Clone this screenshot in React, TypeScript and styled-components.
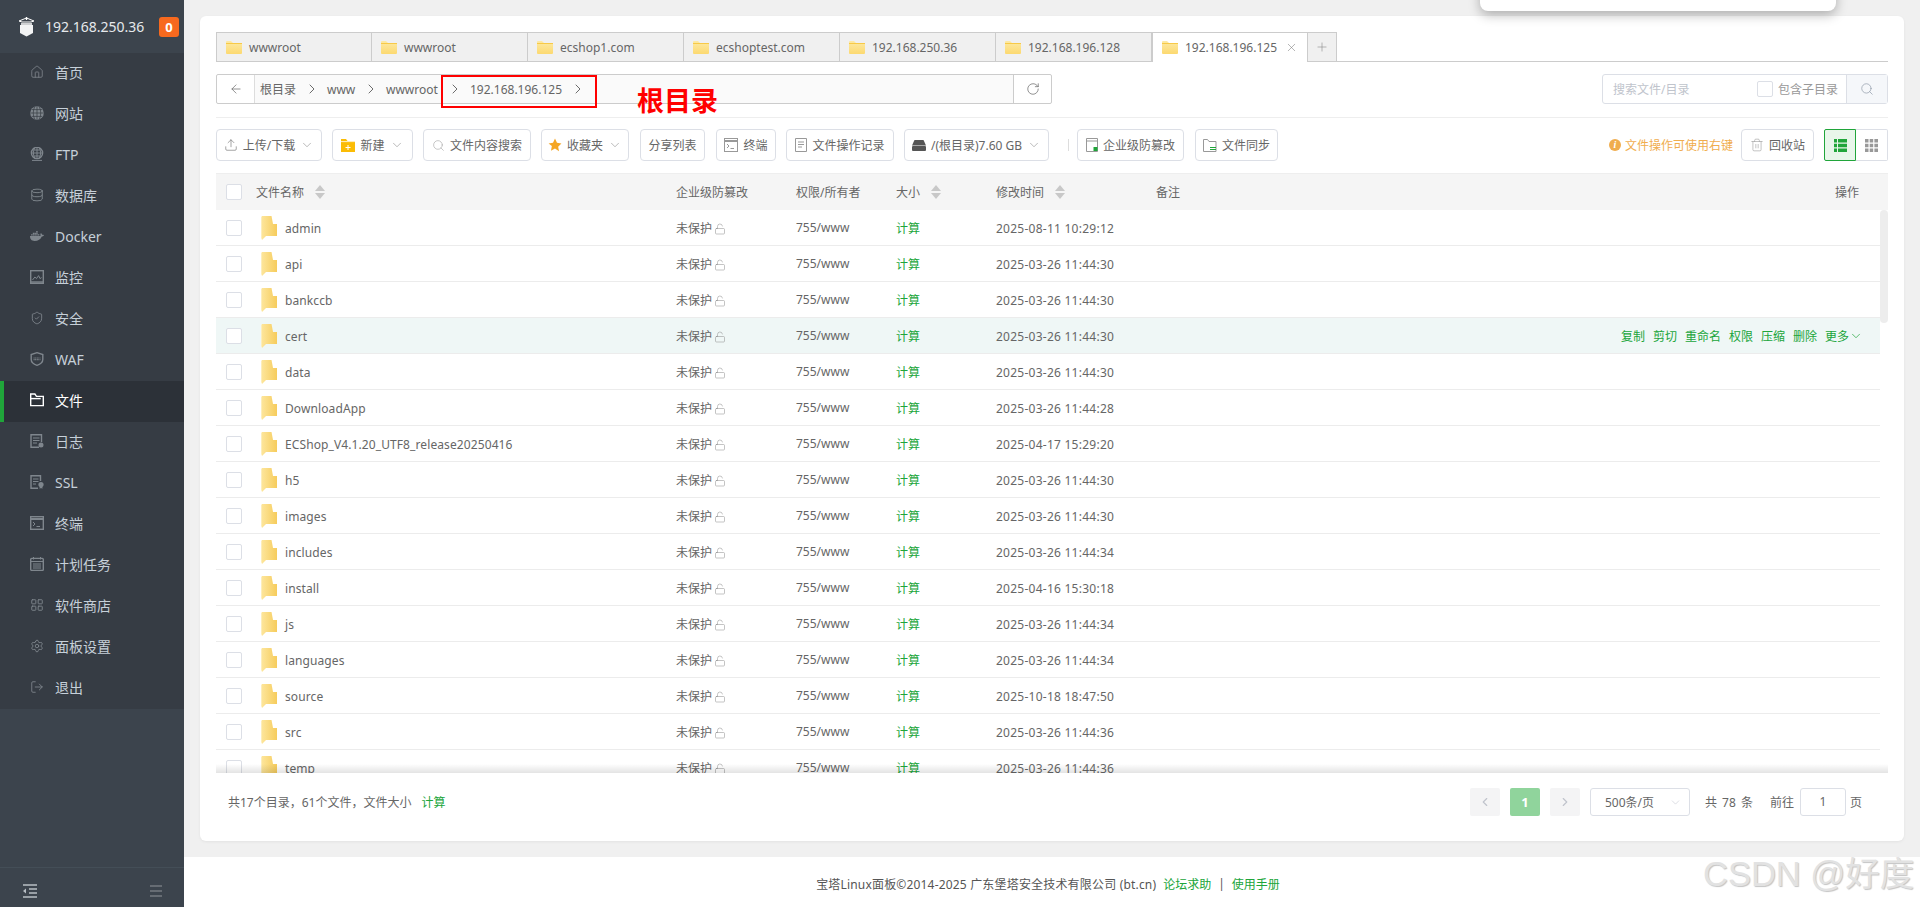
import React from "react";
import styled, { createGlobalStyle } from "styled-components";
import {
  House, Database, ShieldCheck, Settings, LayoutGrid, LogOut, ChevronDown, ChevronLeft, ChevronRight,
  ArrowLeft, RotateCw, X, Plus, Search, Upload, Trash2, LockOpen,
} from "lucide-react";
import { FaDocker } from "react-icons/fa6";

const Global = createGlobalStyle`
  html, body { margin: 0; padding: 0; height: 100%; background: #fff; overflow: hidden; }
  #root { height: 100%; }
  * { box-sizing: border-box; }
  body { font-family: "Noto Sans", "Noto Sans CJK SC", sans-serif; font-size: 12px; color: #666; }
`;

const Page = styled.div`
  position: relative;
  display: grid;
  grid-template-columns: 184px minmax(0, 1fr);
  grid-template-rows: minmax(0, 1fr);
  height: 907px;
  overflow: hidden;
`;
const Sidebar = styled.aside`
  display: flex;
  flex-direction: column;
  min-height: 0;
  background: #3c444d;
  color: #c6d0d9;
`;
const Brand = styled.div`
  display: flex;
  align-items: center;
  flex: none;
  height: 53px;
  padding: 0 5px 0 18px;
  font-size: 14px;
  color: #e6e9ec;
`;
const BrandName = styled.span`
  margin-left: 10px;
  flex: 1;
  white-space: nowrap;
`;
const Badge = styled.span`
  width: 20px;
  height: 20px;
  border-radius: 3px;
  background: #f7691e;
  color: #fff;
  font-weight: 700;
  font-size: 13px;
  line-height: 20px;
  text-align: center;
`;
const Menu = styled.nav`
  display: flex;
  flex-direction: column;
  flex: none;
  background: #363c44;
`;
const MenuItem = styled.div<{ $active?: boolean }>`
  display: flex;
  align-items: center;
  gap: 11px;
  height: 41px;
  padding-left: ${(p) => (p.$active ? "26px" : "30px")};
  padding-bottom: 3px;
  font-size: 14px;
  color: ${(p) => (p.$active ? "#fff" : "#c6d0d9")};
  background: ${(p) => (p.$active ? "#2c3138" : "transparent")};
  border-left: ${(p) => (p.$active ? "4px solid #20a53a" : "none")};
  svg { width: 14px; height: 14px; flex: none; color: ${(p) => (p.$active ? "#fff" : "#7f868d")}; }
`;
const SideSpacer = styled.div`
  flex: 1;
`;
const SideBottom = styled.div`
  display: flex;
  align-items: center;
  justify-content: space-between;
  flex: none;
  height: 40px;
  padding: 6px 22px 0 23px;
  border-top: 1px solid #444e57;
`;
const Main = styled.main`
  display: flex;
  flex-direction: column;
  min-width: 0;
  min-height: 0;
`;
const Content = styled.div`
  flex: 1;
  min-height: 0;
  display: flex;
  padding: 16px;
  background: #f0f0f0;
`;
const Card = styled.section`
  flex: 1;
  min-width: 0;
  min-height: 0;
  display: flex;
  flex-direction: column;
  padding: 16px 16px 25px;
  background: #fff;
  border-radius: 6px;
  box-shadow: 0 1px 3px rgba(0, 0, 0, 0.06);
`;
const Tabs = styled.div`
  display: flex;
  height: 30px;
  flex: none;
  border-bottom: 1px solid #ccc;
`;
const Tab = styled.div<{ $active?: boolean }>`
  display: flex;
  align-items: center;
  width: 156px;
  height: ${(p) => (p.$active ? "30px" : "29px")};
  padding: 0 9px;
  gap: 7px;
  color: #666;
  font-size: 12px;
  background: ${(p) => (p.$active ? "#fff" : "#f0f0f0")};
  border: 1px solid #ccc;
  border-left: ${(p) => (p.$active ? "1px solid #ccc" : "none")};
  border-bottom: none;
  &:first-child { border-left: 1px solid #ccc; }
  span { flex: 1; white-space: nowrap; }
  svg.close { color: #777; }
`;
const TabAdd = styled.div`
  display: flex;
  align-items: center;
  justify-content: center;
  width: 29px;
  height: 29px;
  background: #f0f0f0;
  border: 1px solid #ccc;
  border-left: none;
  border-bottom: none;
  color: #888;
`;
const PathRow = styled.div`
  display: flex;
  justify-content: space-between;
  flex: none;
  margin-top: 12px;
  height: 30px;
`;
const PathBar = styled.div`
  display: flex;
  width: 836px;
  height: 30px;
  border: 1px solid #ccc;
  border-radius: 2px;
`;
const PathButton = styled.div`
  display: flex;
  align-items: center;
  justify-content: center;
  flex: none;
  width: 37px;
  color: #666;
`;
const PathTrail = styled.div`
  flex: 1;
  display: flex;
  align-items: center;
  background: #fafafa;
  border-left: 1px solid #ddd;
  border-right: 1px solid #ccc;
  padding-left: 5px;
  color: #666;
`;
const Crumb = styled.span<{ $w: number }>`
  width: ${(p) => p.$w}px;
  white-space: nowrap;
`;
const CrumbArrow = styled.span`
  display: flex;
  justify-content: center;
  width: 31px;
  color: #555;
`;
const SearchBox = styled.div`
  display: flex;
  align-items: center;
  width: 286px;
  height: 30px;
  border: 1px solid #dcdfe6;
  border-radius: 3px;
`;
const SearchPlaceholder = styled.span`
  flex: 1;
  padding-left: 10px;
  color: #c0c4cc;
`;
const SearchCheck = styled.span`
  display: flex;
  align-items: center;
  gap: 5px;
  padding-right: 8px;
  color: #999;
`;
const SearchButton = styled.span`
  display: flex;
  align-items: center;
  justify-content: center;
  flex: none;
  width: 41px;
  height: 100%;
  background: #f5f7fa;
  border-left: 1px solid #dcdfe6;
  color: #8f99a8;
`;
const Box = styled.span`
  display: inline-block;
  flex: none;
  width: 16px;
  height: 16px;
  background: #fff;
  border: 1px solid #dcdfe6;
  border-radius: 2px;
`;
const Rule = styled.div`
  flex: none;
  height: 1px;
  margin-top: 13px;
  background: #eee;
`;
const Toolbar = styled.div`
  display: flex;
  align-items: center;
  flex: none;
  height: 32px;
  margin-top: 11px;
`;
const ToolButton = styled.div<{ $w: number; $gap?: number }>`
  display: flex;
  align-items: center;
  justify-content: center;
  gap: 5px;
  flex: none;
  width: ${(p) => p.$w}px;
  height: 32px;
  margin-right: ${(p) => p.$gap ?? 10}px;
  border: 1px solid #dcdfe6;
  border-radius: 4px;
  color: #666;
  white-space: nowrap;
`;
const ToolDivider = styled.span`
  width: 1px;
  height: 12px;
  margin: 0 8px 0 19px;
  background: #ddd;
`;
const ToolSpacer = styled.span`
  flex: 1;
`;
const Hint = styled.span`
  display: flex;
  align-items: center;
  gap: 4px;
  margin-right: 8px;
  color: #f0ad4e;
`;
const HintDot = styled.span`
  width: 12px;
  height: 12px;
  border-radius: 50%;
  background: #f0ad4e;
  color: #fff;
  font: italic 700 10px/12px "Liberation Serif", serif;
  text-align: center;
`;
const ViewButton = styled.span<{ $active?: boolean }>`
  display: flex;
  align-items: center;
  justify-content: center;
  width: 32px;
  height: 32px;
  border: 1px solid ${(p) => (p.$active ? "#20a53a" : "#dcdfe6")};
  border-left-width: ${(p) => (p.$active ? "1px" : "0")};
  border-radius: ${(p) => (p.$active ? "2px 0 0 2px" : "0 2px 2px 0")};
  background: ${(p) => (p.$active ? "#e8f6ea" : "#fff")};
  color: ${(p) => (p.$active ? "#20a53a" : "#999")};
`;
const columns = "30px 420px 120px 100px 100px 160px 1fr auto";
const HeadRow = styled.div`
  display: grid;
  grid-template-columns: ${columns};
  align-items: center;
  flex: none;
  height: 37px;
  margin-top: 12px;
  padding: 0 29px 0 10px;
  background: #f5f5f5;
  border-top: 1px solid #eee;
  color: #666;
`;
const HeadCell = styled.span`
  display: flex;
  align-items: center;
  gap: 11px;
  white-space: nowrap;
`;
const CheckCell = styled.span`
  display: flex;
`;
const SortMark = styled.span`
  display: flex;
  flex-direction: column;
  gap: 2px;
  &::before, &::after {
    content: "";
    width: 0;
    border-left: 5px solid transparent;
    border-right: 5px solid transparent;
  }
  &::before { border-bottom: 6px solid #c8c8c8; }
  &::after { border-top: 6px solid #c8c8c8; }
`;
const ListWrap = styled.div`
  position: relative;
  flex: 1;
  min-height: 0;
  display: flex;
  overflow: hidden;
  &::after {
    content: "";
    position: absolute;
    left: 0;
    right: 0;
    bottom: 0;
    height: 9px;
    background: linear-gradient(to bottom, rgba(0, 0, 0, 0), rgba(0, 0, 0, 0.11));
  }
`;
const Rows = styled.div`
  flex: 1;
  min-width: 0;
`;
const Row = styled.div<{ $hover?: boolean }>`
  display: grid;
  grid-template-columns: ${columns};
  align-items: center;
  height: 36px;
  padding: 0 17px 0 10px;
  border-bottom: 1px solid #ececec;
  background: ${(p) => (p.$hover ? "#eff7f6" : "#fff")};
  color: #666;
  white-space: nowrap;
`;
const NameCell = styled.span`
  display: flex;
  align-items: center;
  gap: 8px;
  padding-left: 5px;
  font-size: 12px;
`;
const NameText = styled.span`
  padding-top: 2px;
  letter-spacing: 0.1px;
`;
const TimeCell = styled.span`
  padding-top: 1px;
  letter-spacing: 0.25px;
`;
const ProtectCell = styled.span`
  display: flex;
  align-items: center;
  gap: 2px;
  svg { color: #888; margin-top: 2px; }
`;
const GreenText = styled.span`
  color: #20a53a;
`;
const Actions = styled.span`
  display: flex;
  align-items: center;
  gap: 8px;
  color: #20a53a;
  svg { margin-left: -8px; }
`;
const Scrollbar = styled.div`
  flex: none;
  width: 8px;
`;
const Thumb = styled.div`
  height: 113px;
  border-radius: 4px;
  background: #ededed;
`;
const CardFoot = styled.div`
  display: flex;
  align-items: center;
  justify-content: space-between;
  flex: none;
  height: 28px;
  margin-top: 15px;
  padding: 0 26px 0 12px;
`;
const Summary = styled.span`
  display: flex;
  gap: 10px;
`;
const Pager = styled.div`
  display: flex;
  align-items: center;
`;
const PageButton = styled.span<{ $current?: boolean }>`
  display: flex;
  align-items: center;
  justify-content: center;
  width: 30px;
  height: 28px;
  margin-right: 10px;
  border-radius: 2px;
  background: ${(p) => (p.$current ? "#90d49c" : "#f4f4f5")};
  color: ${(p) => (p.$current ? "#fff" : "#c0c4cc")};
  font-weight: 700;
  font-size: 13px;
`;
const PageSelect = styled.span`
  display: flex;
  align-items: center;
  justify-content: space-between;
  width: 100px;
  height: 28px;
  padding: 0 7px 0 14px;
  border: 1px solid #dcdfe6;
  border-radius: 3px;
  color: #666;
  svg { color: #c0c4cc; }
`;
const PageText = styled.span<{ $ml: number; $wide?: boolean }>`
  margin-left: ${(p) => p.$ml}px;
  word-spacing: ${(p) => (p.$wide ? "2px" : "0")};
  white-space: nowrap;
`;
const PageInput = styled.span`
  width: 46px;
  height: 28px;
  margin-left: 6px;
  border: 1px solid #dcdfe6;
  border-radius: 3px;
  line-height: 26px;
  text-align: center;
`;
const Footer = styled.footer`
  display: flex;
  align-items: center;
  justify-content: center;
  gap: 7px;
  flex: none;
  height: 50px;
  padding: 3px 8px 0 0;
  background: #fff;
  color: #555;
  white-space: nowrap;
`;
const FooterCopy = styled.span`
  letter-spacing: 0.18px;
`;
const Toast = styled.div`
  position: absolute;
  top: -20px;
  left: 1480px;
  width: 356px;
  height: 31px;
  background: #fff;
  border-radius: 8px;
  box-shadow: 0 4px 12px rgba(0, 0, 0, 0.28);
`;
const Annotation = styled.div`
  position: absolute;
  left: 441px;
  top: 75px;
  width: 156px;
  height: 33px;
  border: 2px solid #f00;
`;
const AnnotationLabel = styled.div`
  position: absolute;
  left: 637px;
  top: 81px;
  color: #f00;
  font-size: 27px;
  font-weight: 700;
  line-height: 38px;
  white-space: nowrap;
  font-family: "Noto Sans CJK SC", sans-serif;
`;
const Watermark = styled.div`
  position: absolute;
  left: 1703px;
  top: 854px;
  color: #e2e2e2;
  font: 34.5px/40px "Liberation Sans", "Noto Sans CJK SC", sans-serif;
  text-shadow: 1px 1px 1px #c4c4c4;
  white-space: nowrap;
`;

const TabFolder = () => (
  <svg width="16" height="13" viewBox="0 0 16 13" style={{ flex: "none" }}>
    <defs>
      <linearGradient id="tf" x1="0" y1="0" x2="0" y2="1">
        <stop offset="0" stopColor="#fdeaa5" />
        <stop offset="1" stopColor="#fcd970" />
      </linearGradient>
    </defs>
    <path d="M0 1a1 1 0 0 1 1-1h4l2 2h8a1 1 0 0 1 1 1v9a1 1 0 0 1-1 1H1a1 1 0 0 1-1-1z" fill="url(#tf)" />
    <path d="M0 2.500h16" stroke="#f7c948" strokeWidth="1" />
  </svg>
);
const RowFolder = () => (
  <svg width="16" height="24" viewBox="0 0 16 24" style={{ flex: "none" }}>
    <defs>
      <linearGradient id="rf" x1="0" y1="0" x2="1" y2="0">
        <stop offset="0" stopColor="#fde59a" />
        <stop offset="1" stopColor="#f6cc5c" />
      </linearGradient>
    </defs>
    <path d="M1 0h9.500L12 8h4v12H5l-4 4z" fill="url(#rf)" />
    <path d="M0 1l1-1v24l-1-2z" fill="#fdeebb" />
  </svg>
);
const LogoIcon = () => (
  <svg width="17" height="20" viewBox="0 0 17 20">
    <path d="M1 4L8.500 1 16 4l-3 1H4z" fill="none" stroke="#fff" strokeWidth="1" />
    <path d="M8.500 0v3M3 7h11" stroke="#fff" strokeWidth="1.400" />
    <path d="M2 8h13v8l-6.500 3.500L2 16z" fill="#f2f3f4" />
  </svg>
);
const s = { fill: "none", stroke: "currentColor", strokeWidth: 1.4 } as const;
const FtpIcon = () => (
  <svg viewBox="0 0 14 14" {...s}><circle cx="7" cy="6" r="5.600" /><path d="M1.400 6h11.200M7 .4v11.200M3.500 3h7M3.500 9h7M4.600 .9c-1.600 3-1.600 7 0 10M9.400 .9c1.600 3 1.600 7 0 10M2 13.400h10" strokeWidth="1" /></svg>
);
const WebIcon = () => (
  <svg viewBox="0 0 14 14"><circle cx="7" cy="7" r="6.800" fill="currentColor" /><path d="M.5 7h13M7 .5v13M1.800 3.600h10.400M1.800 10.400h10.400M4.600 1c-1.800 3.600-1.800 8.400 0 12M9.400 1c1.800 3.600 1.800 8.400 0 12" fill="none" stroke="#363c44" strokeWidth=".7" /></svg>
);
const MonitorIcon = () => (
  <svg viewBox="0 0 14 14" {...s}><rect x=".7" y=".7" width="12.600" height="12.600" /><path d="M2.500 10l2.400-3 1.600 1.600L8.600 5.600l1.400 3 1.600-1" strokeWidth="1" /><path d="M.7 12h12.600" strokeWidth="1.400" /></svg>
);
const WafIcon = () => (
  <svg viewBox="0 0 14 14" {...s}><path d="M7 .7l5.800 1.800v5c0 2.800-2.600 4.800-5.800 5.800-3.200-1-5.800-3-5.800-5.800v-5z" /><path d="M3.600 6h6.800M3.600 7.600h6.800" strokeWidth="1.200" strokeDasharray="1 .6" /></svg>
);
const FileIcon = () => (
  <svg viewBox="0 0 14 14" {...s}><path d="M.7 12.600V1h4.200l1.600 2.400h6.800v9.200z" /><path d="M.7 5.600h10" /></svg>
);
const LogIcon = () => (
  <svg viewBox="0 0 14 14" {...s}><path d="M9 13.300H1V.7h10.500V8" /><path d="M3 4h6.500M3 6.500h6.500M3 9h4" strokeWidth="1" /><circle cx="11" cy="11" r="1.800" fill="currentColor" /></svg>
);
const SslIcon = () => (
  <svg viewBox="0 0 14 14" {...s}><path d="M8 13.300H1V.7h9.500V6" /><path d="M3 4h5.500M3 6.500h5.500M3 9h3" strokeWidth="1" /><circle cx="11" cy="9.600" r="2.600" fill="currentColor" stroke="none" /><path d="M9.600 11.600v2.200l1.400-.8 1.400.8v-2.200" fill="currentColor" stroke="none" /></svg>
);
const TermIcon = () => (
  <svg viewBox="0 0 14 14" {...s}><rect x=".7" y=".7" width="12.600" height="12.600" /><path d="M.7 3h12.600" strokeWidth="2" /><path d="M3 6l2 2-2 2M6.500 10.500H10" strokeWidth="1" /></svg>
);
const PlanIcon = () => (
  <svg viewBox="0 0 14 14" {...s}><rect x=".7" y="1.400" width="12.600" height="12" rx="1" /><path d="M3.500 0v2.500M10.500 0v2.500M.7 4.500h12.600M3 7h8M3 9h8M3 11h8" strokeWidth="1" /></svg>
);

const menu: [string, React.ReactNode, boolean?][] = [
  ["首页", <House strokeWidth={1.4} />],
  ["网站", <WebIcon />],
  ["FTP", <FtpIcon />],
  ["数据库", <Database strokeWidth={1.6} />],
  ["Docker", <FaDocker />],
  ["监控", <MonitorIcon />],
  ["安全", <ShieldCheck strokeWidth={1.5} />],
  ["WAF", <WafIcon />],
  ["文件", <FileIcon />, true],
  ["日志", <LogIcon />],
  ["SSL", <SslIcon />],
  ["终端", <TermIcon />],
  ["计划任务", <PlanIcon />],
  ["软件商店", <LayoutGrid strokeWidth={1.6} />],
  ["面板设置", <Settings strokeWidth={1.5} />],
  ["退出", <LogOut strokeWidth={1.5} />],
];
const tabs = ["wwwroot", "wwwroot", "ecshop1.com", "ecshoptest.com", "192.168.250.36", "192.168.196.128", "192.168.196.125"];
const crumbs: [string, number][] = [["根目录", 36], ["www", 28], ["wwwroot", 53], ["192.168.196.125", 92]];
const files: [string, string][] = [
  ["admin", "2025-08-11 10:29:12"],
  ["api", "2025-03-26 11:44:30"],
  ["bankccb", "2025-03-26 11:44:30"],
  ["cert", "2025-03-26 11:44:30"],
  ["data", "2025-03-26 11:44:30"],
  ["DownloadApp", "2025-03-26 11:44:28"],
  ["ECShop_V4.1.20_UTF8_release20250416", "2025-04-17 15:29:20"],
  ["h5", "2025-03-26 11:44:30"],
  ["images", "2025-03-26 11:44:30"],
  ["includes", "2025-03-26 11:44:34"],
  ["install", "2025-04-16 15:30:18"],
  ["js", "2025-03-26 11:44:34"],
  ["languages", "2025-03-26 11:44:34"],
  ["source", "2025-10-18 18:47:50"],
  ["src", "2025-03-26 11:44:36"],
  ["temp", "2025-03-26 11:44:36"],
];
const rowActions = ["复制", "剪切", "重命名", "权限", "压缩", "删除", "更多"];

const Caret = () => <ChevronDown size={14} strokeWidth={1} color="#888" />;

export default function App() {
  return (
    <Page>
      <Global />
      <Sidebar>
        <Brand>
          <LogoIcon />
          <BrandName>192.168.250.36</BrandName>
          <Badge>0</Badge>
        </Brand>
        <Menu>
          {menu.map(([label, icon, active]) => (
            <MenuItem key={label} $active={active}>
              {icon}
              {label}
            </MenuItem>
          ))}
        </Menu>
        <SideSpacer />
        <SideBottom>
          <svg width="14" height="14" viewBox="0 0 14 14">
            <path d="M0 1h14M6 5h8M6 9h8M0 13h14" stroke="#b8bec4" strokeWidth="1.400" />
            <path d="M0 7l3-2.400v4.800z" fill="#b8bec4" />
          </svg>
          <svg width="14" height="14" viewBox="0 0 14 14">
            <path d="M2 2h12M2 7h12M2 12h12" stroke="#666c73" strokeWidth="1.800" />
          </svg>
        </SideBottom>
      </Sidebar>
      <Main>
        <Content>
          <Card>
            <Tabs>
              {tabs.map((t, i) => (
                <Tab key={i} $active={i === 6}>
                  <TabFolder />
                  <span>{t}</span>
                  {i === 6 && <X className="close" size={13} strokeWidth={1} />}
                </Tab>
              ))}
              <TabAdd><Plus size={14} strokeWidth={1} /></TabAdd>
            </Tabs>
            <PathRow>
              <PathBar>
                <PathButton><ArrowLeft size={14} strokeWidth={1.2} /></PathButton>
                <PathTrail>
                  {crumbs.map(([c, w]) => (
                    <React.Fragment key={c}>
                      <Crumb $w={w}>{c}</Crumb>
                      <CrumbArrow><ChevronRight size={16} strokeWidth={1.3} /></CrumbArrow>
                    </React.Fragment>
                  ))}
                </PathTrail>
                <PathButton><RotateCw size={14} strokeWidth={1.2} /></PathButton>
              </PathBar>
              <SearchBox>
                <SearchPlaceholder>搜索文件/目录</SearchPlaceholder>
                <SearchCheck><Box />包含子目录</SearchCheck>
                <SearchButton><Search size={14} strokeWidth={1.2} /></SearchButton>
              </SearchBox>
            </PathRow>
            <Rule />
            <Toolbar>
              <ToolButton $w={106}><Upload size={14} strokeWidth={1} />上传/下载<Caret /></ToolButton>
              <ToolButton $w={81}>
                <svg width="14" height="13" viewBox="0 0 14 13"><path d="M0 0h5l1.500 2H14v11H0z" fill="#fbbc05" /><path d="M0 2.600h14" stroke="#fff" strokeWidth=".8" /><path d="M7 6v5M4.500 8.500h5" stroke="#fff" strokeWidth="1" /></svg>
                新建<Caret />
              </ToolButton>
              <ToolButton $w={108}><Search size={13} strokeWidth={1} color="#999" />文件内容搜索</ToolButton>
              <ToolButton $w={88} $gap={11}>
                <svg width="14" height="14" viewBox="0 0 24 24"><path d="M12 1l3.400 7.300 7.600 1-5.600 5.500 1.500 7.900L12 18l-6.900 3.700 1.500-7.900L1 9.300l7.600-1z" fill="#f5a623" /></svg>
                收藏夹<Caret />
              </ToolButton>
              <ToolButton $w={65} $gap={11}>分享列表</ToolButton>
              <ToolButton $w={60}>
                <svg width="14" height="14" viewBox="0 0 14 14" fill="none" stroke="#999"><rect x=".5" y=".5" width="13" height="13" /><path d="M.5 3h13" strokeWidth="2" /><path d="M3 6l2 2-2 2M6.500 10.500H10" /></svg>
                终端
              </ToolButton>
              <ToolButton $w={108}>
                <svg width="12" height="14" viewBox="0 0 12 14" fill="none" stroke="#999"><path d="M.5.500h11v13H.5zM3 4h6M3 6.500h6M3 9h4" /></svg>
                文件操作记录
              </ToolButton>
              <ToolButton $w={145} $gap={0}>
                <svg width="14" height="11" viewBox="0 0 14 11"><path d="M2.500 0h9L14 5.500H0z" fill="#555" /><rect y="6" width="14" height="5" rx="1" fill="#555" /></svg>
                /(根目录)7.60 GB<Caret />
              </ToolButton>
              <ToolDivider />
              <ToolButton $w={107} $gap={11}>
                <svg width="12" height="14" viewBox="0 0 12 14" fill="none" stroke="#999"><path d="M.5.500h11v13H.5zM.5 3h11" /><rect x="7.500" y="9" width="4" height="4" fill="#20a53a" stroke="none" /></svg>
                企业级防篡改
              </ToolButton>
              <ToolButton $w={83}>
                <svg width="14" height="13" viewBox="0 0 14 13" fill="none" stroke="#999"><path d="M.5 12.500V.500h4l1.500 2h7v10z" /><path d="M7 8.500h6M7 10.500h6" stroke="#20a53a" /></svg>
                文件同步
              </ToolButton>
              <ToolSpacer />
              <Hint><HintDot>i</HintDot>文件操作可使用右键</Hint>
              <ToolButton $w={73}><Trash2 size={14} strokeWidth={1} color="#999" />回收站</ToolButton>
              <ViewButton $active>
                <svg width="13" height="13" viewBox="0 0 13 13" fill="currentColor"><path d="M0 0h3v3.500H0zM4 0h9v3.500H4zM0 4.700h3v3.500H0zM4 4.700h9v3.500H4zM0 9.400h3V13H0zM4 9.400h9V13H4z" /></svg>
              </ViewButton>
              <ViewButton>
                <svg width="13" height="13" viewBox="0 0 13 13" fill="currentColor"><path d="M0 0h3.500v3.500H0zM4.700 0h3.500v3.500H4.700zM9.400 0H13v3.500H9.400zM0 4.700h3.500v3.500H0zM4.700 4.700h3.500v3.500H4.700zM9.400 4.700H13v3.500H9.400zM0 9.400h3.500V13H0zM4.700 9.400h3.500V13H4.700zM9.400 9.400H13V13H9.400z" /></svg>
              </ViewButton>
            </Toolbar>
            <HeadRow>
              <CheckCell><Box /></CheckCell>
              <HeadCell>文件名称<SortMark /></HeadCell>
              <HeadCell>企业级防篡改</HeadCell>
              <HeadCell>权限/所有者</HeadCell>
              <HeadCell>大小<SortMark /></HeadCell>
              <HeadCell>修改时间<SortMark /></HeadCell>
              <HeadCell>备注</HeadCell>
              <HeadCell>操作</HeadCell>
            </HeadRow>
            <ListWrap>
              <Rows>
                {files.map(([name, time], i) => (
                  <Row key={name} $hover={i === 3}>
                    <CheckCell><Box /></CheckCell>
                    <NameCell><RowFolder /><NameText>{name}</NameText></NameCell>
                    <ProtectCell>未保护<LockOpen size={12} strokeWidth={1} /></ProtectCell>
                    <span>755/www</span>
                    <GreenText>计算</GreenText>
                    <TimeCell>{time}</TimeCell>
                    <span />
                    {i === 3 ? (
                      <Actions>
                        {rowActions.map((a) => <span key={a}>{a}</span>)}
                        <ChevronDown size={14} strokeWidth={1.2} />
                      </Actions>
                    ) : <span />}
                  </Row>
                ))}
              </Rows>
              <Scrollbar><Thumb /></Scrollbar>
            </ListWrap>
            <CardFoot>
              <Summary>共17个目录，61个文件，文件大小<GreenText>计算</GreenText></Summary>
              <Pager>
                <PageButton><ChevronLeft size={14} strokeWidth={2} /></PageButton>
                <PageButton $current>1</PageButton>
                <PageButton><ChevronRight size={14} strokeWidth={2} /></PageButton>
                <PageSelect>500条/页<ChevronDown size={13} strokeWidth={1} /></PageSelect>
                <PageText $ml={15} $wide>共 78 条</PageText>
                <PageText $ml={17}>前往</PageText>
                <PageInput>1</PageInput>
                <PageText $ml={4}>页</PageText>
              </Pager>
            </CardFoot>
          </Card>
        </Content>
        <Footer>
          <FooterCopy>宝塔Linux面板©2014-2025 广东堡塔安全技术有限公司 (bt.cn)</FooterCopy>
          <GreenText>论坛求助</GreenText>
          <span>|</span>
          <GreenText>使用手册</GreenText>
        </Footer>
      </Main>
      <Toast />
      <Annotation />
      <AnnotationLabel>根目录</AnnotationLabel>
      <Watermark>CSDN @好度</Watermark>
    </Page>
  );
}
